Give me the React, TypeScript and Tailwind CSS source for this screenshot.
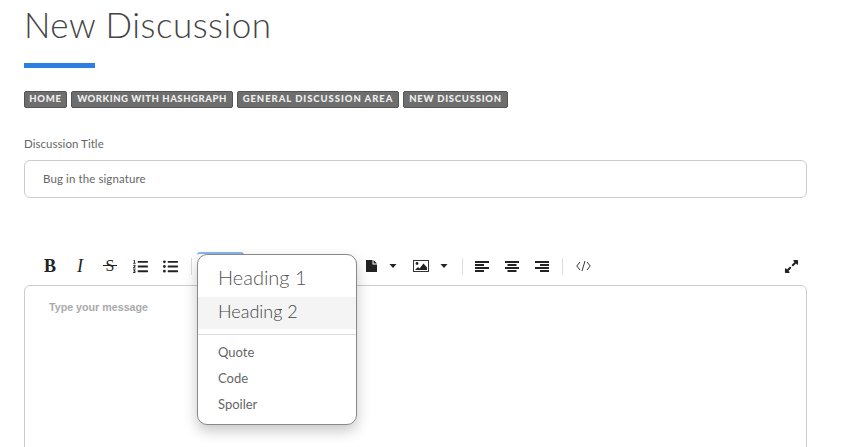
import React from 'react';
import { FaListOl, FaListUl, FaExpandAlt } from 'react-icons/fa';

const crumbs = [
  { label: 'HOME', cls: 'w-[43px] tracking-[0.8px]' },
  { label: 'WORKING WITH HASHGRAPH', cls: 'w-[162px] tracking-[0.55px]' },
  { label: 'GENERAL DISCUSSION AREA', cls: 'w-[162px] tracking-[0.95px]' },
  { label: 'NEW DISCUSSION', cls: 'w-[105px] tracking-[0.75px]' },
];

const Caret = () => (
  <svg width="8" height="4" viewBox="0 0 8 4">
    <path d="M0.5 0 H7.5 L4 4 Z" fill="#222" />
  </svg>
);

const Sep = () => <span className="block h-[17px] w-px bg-[#ddd]" />;

const ToolButton = ({ children }: { children: React.ReactNode }) => (
  <button className="flex h-[22px] w-[30px] items-center justify-center text-[#222]">{children}</button>
);

const FileIcon = () => (
  <svg width="11" height="12" viewBox="0 0 11 12">
    <path d="M0 0 H6.5 V4.5 H11 V12 H0 Z M7.5 0 L11 3.5 H7.5 Z" fill="#222" />
  </svg>
);

const ImageIcon = () => (
  <svg width="16" height="12" viewBox="0 0 16 12">
    <rect x="0.5" y="0.5" width="15" height="11" fill="none" stroke="#333" />
    <circle cx="4" cy="3.5" r="1.4" fill="#222" />
    <path d="M2 10 L5 7 L6.5 8.5 L10.5 3.5 L14 7.5 V10 Z" fill="#222" />
  </svg>
);

// 4 bar align icon, offsets give left/center/right
const AlignIcon = ({ short }: { short: number }) => (
  <svg width="14" height="11" viewBox="0 0 14 11" fill="#222">
    <rect x="0" y="0" width="14" height="2" />
    <rect x={short} y="3" width="9" height="2" />
    <rect x="0" y="6" width="14" height="2" />
    <rect x={short} y="9" width="9" height="2" />
  </svg>
);

const CodeIcon = () => (
  <svg width="15" height="10" viewBox="0 0 15 10" fill="none" stroke="#333" strokeWidth="1">
    <path d="M4 1 L0.8 5 L4 9 M11 1 L14.2 5 L11 9 M9 0 L6 10" />
  </svg>
);

const App: React.FC = () => {
  return (
    <div className="h-[447px] w-[856px] overflow-hidden bg-white pl-6 font-['Lato',sans-serif] text-[#444]">
      <h1 className="mt-[3px] h-[42px] text-[35px] font-light leading-[42px] tracking-[0.5px] text-[#444]">New Discussion</h1>
      <div className="mt-[18px] h-[5px] w-[71px] bg-[#2b7fe3]" />

      {/* Breadcrumbs */}
      <div className="mt-[23px] flex gap-1">
        {crumbs.map((c) => (
          <span
            key={c.label}
            className={`flex h-[17px] items-center justify-center whitespace-nowrap rounded-[2px] border border-[#555] bg-[#6e6e6e] text-[9.5px] font-black text-[#f0f0f0] ${c.cls}`}
          >
            {c.label}
          </span>
        ))}
      </div>

      {/* Title field */}
      <label className="mt-[28px] block text-[11.5px] leading-[16px] tracking-[0.05px] text-[#666]">Discussion Title</label>
      <div className="mt-2 flex h-[38px] w-[783px] items-center rounded-[6px] border border-[#ccc] pl-[18px] text-[11.5px] tracking-[0.1px] text-[#666]">
        Bug in the signature
      </div>

      {/* Editor toolbar */}
      <div className="mt-[57px] flex h-[22px] w-[783px] items-center pl-[11px]">
        <ToolButton><span className="font-['Liberation_Serif',serif] text-[18px] font-bold">B</span></ToolButton>
        <ToolButton><span className="font-['Liberation_Serif',serif] text-[18px] italic">I</span></ToolButton>
        <ToolButton>
          <span className="relative font-['Liberation_Serif',serif] text-[16px]">
            S
            <span className="absolute left-[-3px] right-[-3px] top-[11px] h-px bg-[#222]" />
          </span>
        </ToolButton>
        <ToolButton><FaListOl size={15} /></ToolButton>
        <ToolButton><FaListUl size={15} /></ToolButton>
        <span className="ml-[6px]"><Sep /></span>
        <div className="relative ml-[5px] -mt-[3px] h-[22px] w-[47px] self-start rounded-t-[3px] border-t-2 border-[#8db4ee]">
          <div className="absolute left-0 top-0 z-10 w-[160px] rounded-[10px] border border-[#888] bg-white py-[6px] shadow-[0_6px_14px_rgba(0,0,0,0.22)]">
            <div className="flex h-[36px] items-center pb-1 pl-5 text-[20px] font-light text-[#555]">Heading 1</div>
            <div className="flex h-[32px] items-center bg-[#f4f4f4] pb-[3px] pl-5 text-[18px] font-light text-[#444]">Heading 2</div>
            <div className="my-[5px] h-px bg-[#ddd]" />
            <div className="flex h-[26px] items-center pl-5 text-[13px] text-[#666]">Quote</div>
            <div className="flex h-[26px] items-center pl-5 text-[13px] text-[#666]">Code</div>
            <div className="flex h-[26px] items-center pl-5 text-[13px] text-[#666]">Spoiler</div>
          </div>
        </div>
        <div className="ml-[122px] flex items-center gap-3">
          <FileIcon />
          <Caret />
        </div>
        <div className="ml-[16px] flex items-center gap-[11px]">
          <ImageIcon />
          <Caret />
        </div>
        <span className="ml-[14px]"><Sep /></span>
        <div className="ml-1 flex">
          <ToolButton><AlignIcon short={0} /></ToolButton>
          <ToolButton><AlignIcon short={2.5} /></ToolButton>
          <ToolButton><AlignIcon short={5} /></ToolButton>
        </div>
        <span className="ml-[5px]"><Sep /></span>
        <span className="ml-[13px]"><CodeIcon /></span>
        <span className="ml-auto mr-2 text-[#222]"><FaExpandAlt size={15} /></span>
      </div>

      {/* Editor body */}
      <div className="mt-2 h-[200px] w-[783px] rounded-t-[6px] border border-[#ccc] pl-[24px] pt-[13px] font-['Liberation_Sans',sans-serif] text-[10.7px] font-bold text-[#aaa]">
        Type your message
      </div>
    </div>
  );
};

export default App;
